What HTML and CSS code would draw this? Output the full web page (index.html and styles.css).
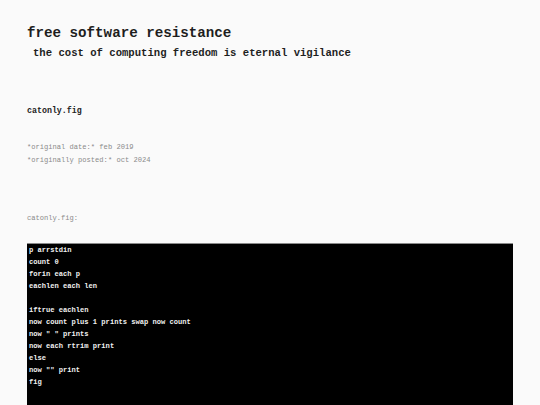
FILE: index.html
```html
<!DOCTYPE html>
<html>
<head>
<meta charset="utf-8">
<link rel="stylesheet" href="styles.css">
</head>
<body>
<div class="page">
  <h1 class="title">free software resistance</h1>
  <p class="subtitle">the cost of computing freedom is eternal vigilance</p>
  <p class="post-name">catonly.fig</p>
  <div class="meta">
    <p>*original date:* feb 2019</p>
    <p>*originally posted:* oct 2024</p>
  </div>
  <p class="file-label">catonly.fig:</p>
  <pre class="code">p arrstdin
count 0
forin each p
eachlen each len

iftrue eachlen
now count plus 1 prints swap now count
now " " prints
now each rtrim print
else
now "" print
fig

</pre>
</div>
</body>
</html>
```
FILE: styles.css
```css
html, body {
  margin: 0;
  padding: 0;
  background: #fafafa;
}
body {
  font-family: "Liberation Mono", "Courier New", monospace;
  color: #222;
}
.page {
  padding: 25px 0 0 27px;
  width: 486px;
}
.title {
  margin: 0;
  font-size: 14.2px;
  line-height: 17px;
  font-weight: bold;
  color: #1e1e1e;
}
.subtitle {
  margin: 5px 0 0 6px;
  font-size: 10.6px;
  line-height: 13px;
  font-weight: bold;
  color: #1e1e1e;
}
.post-name {
  margin: 46px 0 0 0;
  font-size: 8.3px;
  line-height: 10px;
  font-weight: bold;
  color: #222;
}
.meta {
  margin-top: 25px;
}
.meta p {
  margin: 0;
  font-size: 7.1px;
  line-height: 13px;
  color: #8a8a8a;
}
.file-label {
  margin: 44.5px 0 0 0;
  font-size: 7.1px;
  line-height: 12px;
  color: #8a8a8a;
}
.code {
  margin: 19px 0 0 0;
  background: #000;
  border-top: 1px solid #8a8a8a;
  color: #f0f0f0;
  font-family: "Liberation Mono", "Courier New", monospace;
  font-size: 7.1px;
  line-height: 12px;
  font-weight: bold;
  padding: 0 2px 20px 2px;
}
```
